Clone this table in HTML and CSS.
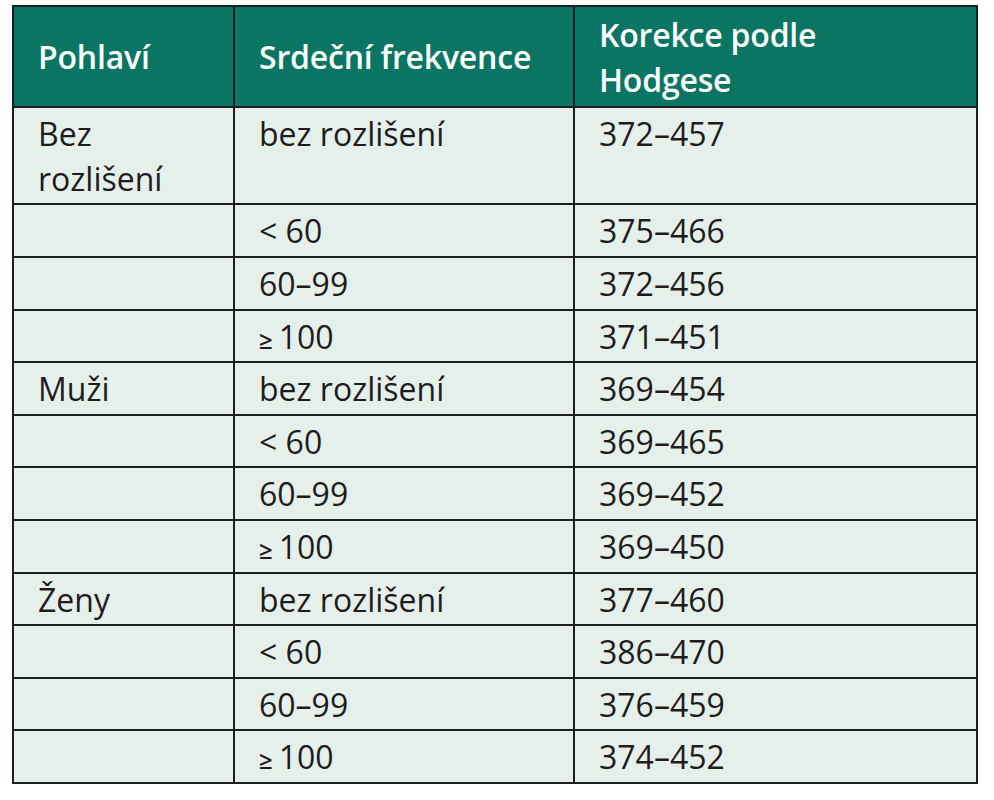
FILE: index.html
```html
<!DOCTYPE html>
<html lang="cs">
<head>
<meta charset="utf-8">
<title>Korekce QT podle Hodgese</title>
<link rel="stylesheet" href="styles.css">
</head>
<body>
<table class="qt-table">
  <colgroup>
    <col class="c1">
    <col class="c2">
    <col class="c3">
  </colgroup>
  <thead>
    <tr>
      <th>Pohlaví</th>
      <th>Srdeční frekvence</th>
      <th>Korekce podle Hodgese</th>
    </tr>
  </thead>
  <tbody>
    <tr><td>Bez rozlišení</td><td>bez rozlišení</td><td>372–457</td></tr>
    <tr><td></td><td>&lt; 60</td><td>375–466</td></tr>
    <tr><td></td><td>60–99</td><td>372–456</td></tr>
    <tr><td></td><td><span class="ge">≥</span>100</td><td>371–451</td></tr>
    <tr><td>Muži</td><td>bez rozlišení</td><td>369–454</td></tr>
    <tr><td></td><td>&lt; 60</td><td>369–465</td></tr>
    <tr><td></td><td>60–99</td><td>369–452</td></tr>
    <tr><td></td><td><span class="ge">≥</span>100</td><td>369–450</td></tr>
    <tr><td>Ženy</td><td>bez rozlišení</td><td>377–460</td></tr>
    <tr><td></td><td>&lt; 60</td><td>386–470</td></tr>
    <tr><td></td><td>60–99</td><td>376–459</td></tr>
    <tr><td></td><td><span class="ge">≥</span>100</td><td>374–452</td></tr>
  </tbody>
</table>
</body>
</html>
```

FILE: styles.css
```css
html, body {
  margin: 0;
  background: #ffffff;
}

body {
  padding: 5px 0 0 12px;
  font-family: "Open Sans", "Liberation Sans", sans-serif;
}

.qt-table {
  border-collapse: collapse;
  width: 964px;
  table-layout: fixed;
  font-size: 32px;
  line-height: 45px;
  color: #1d1d1d;
}

.c1 { width: 221px; }
.c2 { width: 340px; }
.c3 { width: 403px; }

.qt-table th,
.qt-table td {
  border: 2px solid #1b1f1d;
  padding: 3px 24px 2.6px 24px;
  text-align: left;
  vertical-align: top;
}

.qt-table th {
  background: #0a7562;
  color: #ffffff;
  font-weight: 600;
  vertical-align: middle;
  letter-spacing: -0.2px;
  padding-top: 4.5px;
  padding-bottom: 4.3px;
}

.qt-table td {
  background: #e6f0eb;
  font-weight: 400;
}

.ge {
  font-size: 24px;
  line-height: 1;
  font-weight: 600;
  margin-right: 6px;
}
```
